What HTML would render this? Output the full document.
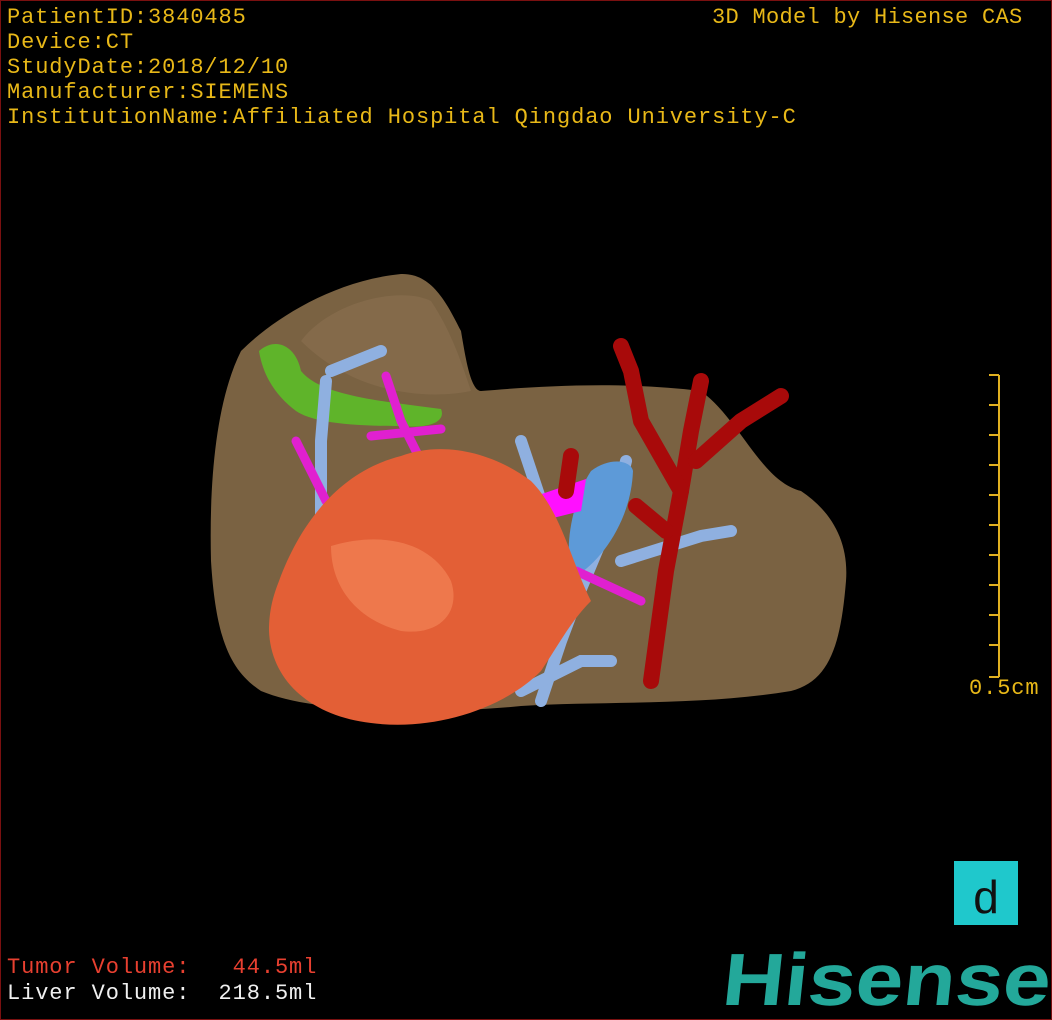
<!DOCTYPE html>
<html><head><meta charset="utf-8"><style>
html,body{margin:0;padding:0;background:#000}
#c{position:relative;width:1050px;height:1018px;border:1px solid #7a1010;overflow:hidden;background:#000;font-family:"Liberation Mono","Noto Sans CJK SC",monospace}
.t{position:absolute;color:#e8b818;font-size:22px;line-height:25px;white-space:pre;letter-spacing:0.9px}
svg{position:absolute;left:0;top:0}
</style></head><body><div id="c">
<svg width="1050" height="1018" viewBox="0 0 1050 1018">
<path d="M240 350 C270 320 330 280 400 273 C430 272 445 300 460 330 C465 360 470 390 480 390 C540 385 620 380 700 390 C740 420 760 480 800 490 C830 510 848 540 845 580 C840 640 830 680 790 690 C700 705 600 700 520 705 C450 712 320 715 260 690 C230 670 215 640 210 560 C208 480 215 400 240 350Z" fill="#7a6242"/>
<path d="M300 340 C330 300 400 285 430 300 C450 330 460 360 470 390 C420 400 350 390 300 340Z" fill="#8a7050" opacity=".6"/>
<path d="M258 350 C275 335 295 345 300 370 C320 395 380 400 440 408 C445 420 430 428 400 425 C340 425 310 420 295 410 C275 395 262 375 258 350Z" fill="#5fb42a"/>
<g stroke="#8fb0e0" stroke-width="12" fill="none" stroke-linecap="round">
<path d="M325 380 L320 440 L320 520"/><path d="M330 370 L380 350"/><path d="M540 700 L560 640 L575 600 L600 540 L615 500 L625 460"/><path d="M520 440 L540 500"/><path d="M620 560 L700 535 L730 530"/><path d="M520 690 L580 660 L610 660"/>
</g>
<path d="M590 470 C610 455 630 460 632 470 C630 520 600 560 575 575 C560 560 570 500 590 470Z" fill="#5d9ad8"/>
<g stroke="#e020d0" stroke-width="9" fill="none" stroke-linecap="round">
<path d="M385 375 L400 420 L420 460"/><path d="M295 440 L325 500"/><path d="M575 570 L640 600"/><path d="M370 435 L440 428"/>
</g>
<path d="M520 500 L585 478 L580 510 L540 520Z" fill="#ff10ff"/>
<g stroke="#a80a0a" stroke-width="16" fill="none" stroke-linecap="round" stroke-linejoin="round">
<path d="M650 680 L665 570 L680 490 L690 430 L700 380"/><path d="M680 490 L640 420 L630 370 L620 345"/><path d="M695 460 L740 420 L780 395"/><path d="M665 530 L635 505"/><path d="M570 455 L565 490"/>
</g>
<path d="M278 580 C300 520 340 470 400 455 C440 440 490 450 530 480 C560 510 570 560 590 600 C570 620 560 640 540 670 C500 710 430 730 370 722 C310 715 270 680 268 630 C268 610 272 595 278 580Z" fill="#e35f36"/>
<path d="M330 545 C380 530 430 540 450 580 C460 610 440 635 400 630 C360 620 330 590 330 545Z" fill="#f07e52" opacity=".8"/>
<g stroke="#e0b020" stroke-width="2"><line x1="998" y1="374" x2="998" y2="676"/>
<line x1="988" y1="374" x2="998" y2="374"/><line x1="988" y1="404" x2="998" y2="404"/><line x1="988" y1="434" x2="998" y2="434"/><line x1="988" y1="464" x2="998" y2="464"/><line x1="988" y1="494" x2="998" y2="494"/><line x1="988" y1="524" x2="998" y2="524"/><line x1="988" y1="554" x2="998" y2="554"/><line x1="988" y1="584" x2="998" y2="584"/><line x1="988" y1="614" x2="998" y2="614"/><line x1="988" y1="644" x2="998" y2="644"/><line x1="988" y1="676" x2="998" y2="676"/></g>
<rect x="953" y="860" width="64" height="64" fill="#1fc8cc"/>
<text x="985" y="912" font-family="Liberation Sans,sans-serif" font-size="46" text-anchor="middle" fill="#111">d</text>
<text x="720" y="1004" font-family="Liberation Sans,sans-serif" font-weight="bold" font-size="74" fill="#23a89a" textLength="328" lengthAdjust="spacingAndGlyphs" transform="skewX(-6) translate(105 0)">Hisense</text>
</svg>
<div class="t" style="left:6px;top:4px">PatientID:3840485
Device:CT
StudyDate:2018/12/10
Manufacturer:SIEMENS
InstitutionName:Affiliated Hospital Qingdao University-C</div>
<div class="t" style="left:711px;top:4px;letter-spacing:0.3px">3D Model by Hisense CAS</div>
<div class="t" style="left:968px;top:675px">0.5cm</div>
<div class="t" style="left:6px;top:954px;color:#e84030">Tumor Volume:   44.5ml</div>
<div class="t" style="left:6px;top:980px;color:#f0f0f0">Liver Volume:  218.5ml</div>
</div></body></html>
